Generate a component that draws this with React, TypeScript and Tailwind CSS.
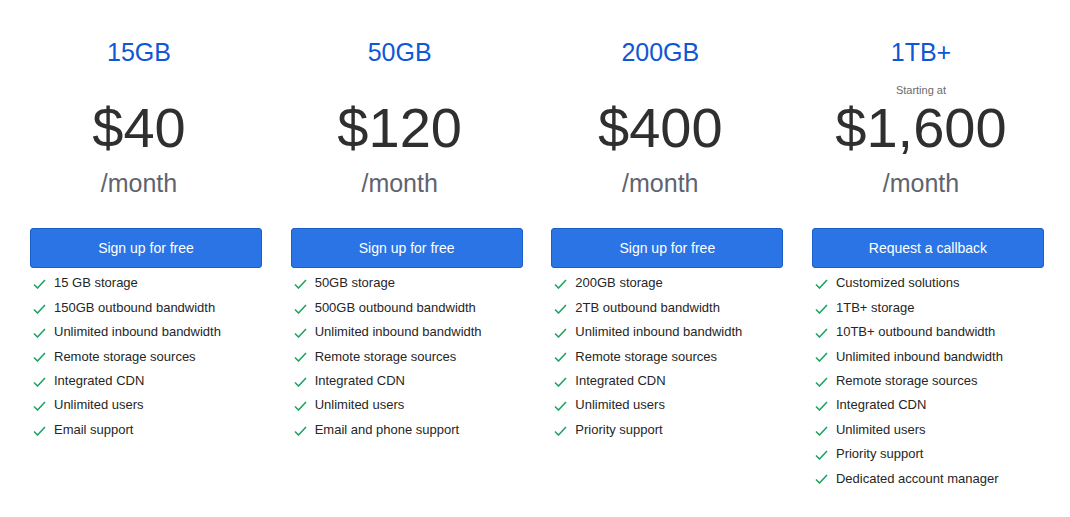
const plans = [
  {
    name: "15GB",
    price: "$40",
    cta: "Sign up for free",
    features: [
      "15 GB storage",
      "150GB outbound bandwidth",
      "Unlimited inbound bandwidth",
      "Remote storage sources",
      "Integrated CDN",
      "Unlimited users",
      "Email support",
    ],
  },
  {
    name: "50GB",
    price: "$120",
    cta: "Sign up for free",
    features: [
      "50GB storage",
      "500GB outbound bandwidth",
      "Unlimited inbound bandwidth",
      "Remote storage sources",
      "Integrated CDN",
      "Unlimited users",
      "Email and phone support",
    ],
  },
  {
    name: "200GB",
    price: "$400",
    cta: "Sign up for free",
    features: [
      "200GB storage",
      "2TB outbound bandwidth",
      "Unlimited inbound bandwidth",
      "Remote storage sources",
      "Integrated CDN",
      "Unlimited users",
      "Priority support",
    ],
  },
  {
    name: "1TB+",
    price: "$1,600",
    starting: true,
    cta: "Request a callback",
    features: [
      "Customized solutions",
      "1TB+ storage",
      "10TB+ outbound bandwidth",
      "Unlimited inbound bandwidth",
      "Remote storage sources",
      "Integrated CDN",
      "Unlimited users",
      "Priority support",
      "Dedicated account manager",
    ],
  },
];

function Check() {
  return (
    <svg width="13" height="10" viewBox="0 0 13 10" className="shrink-0">
      <path d="M1 5.5 L4.5 9 L12 1" fill="none" stroke="#1fa463" strokeWidth="1.6" />
    </svg>
  );
}

export default function App() {
  return (
    <div
      className="w-[1070px] h-[517px] bg-white overflow-hidden"
      style={{ fontFamily: '"Liberation Sans", Arial, sans-serif' }}
    >
      <div className="grid grid-cols-[232px_232px_232px_232px] gap-x-[28.67px] pl-[30px]">
        {plans.map((plan) => (
          <div key={plan.name} className="flex flex-col">
            <div className="pr-[14px] text-center">
              <div className="pt-[37px] text-[25px] leading-[30px] text-[#0f57d4]">
                {plan.name}
              </div>
              <div className="mt-[16px] h-[14px] text-[11px] leading-[14px] text-[#6b6b6b]">
                {plan.starting ? "Starting at" : ""}
              </div>
              <div className="mt-[3px] text-[56px] leading-[56px] text-[#2f2f2f]">
                {plan.price}
              </div>
              <div className="mt-[12px] text-[25px] leading-[30px] text-[#5f6370]">
                /month
              </div>
            </div>
            <button className="mt-[30px] h-[40px] w-full rounded-[3px] border border-[#1a5ec8] bg-[#2a74e6] text-[14px] text-white">
              {plan.cta}
            </button>
            <ul className="mt-[3px]">
              {plan.features.map((f) => (
                <li key={f} className="flex h-[24.4px] items-center text-[13px] text-[#262626]">
                  <span className="flex w-[24px] pl-[3px] pt-[2px]">
                    <Check />
                  </span>
                  {f}
                </li>
              ))}
            </ul>
          </div>
        ))}
      </div>
    </div>
  );
}
